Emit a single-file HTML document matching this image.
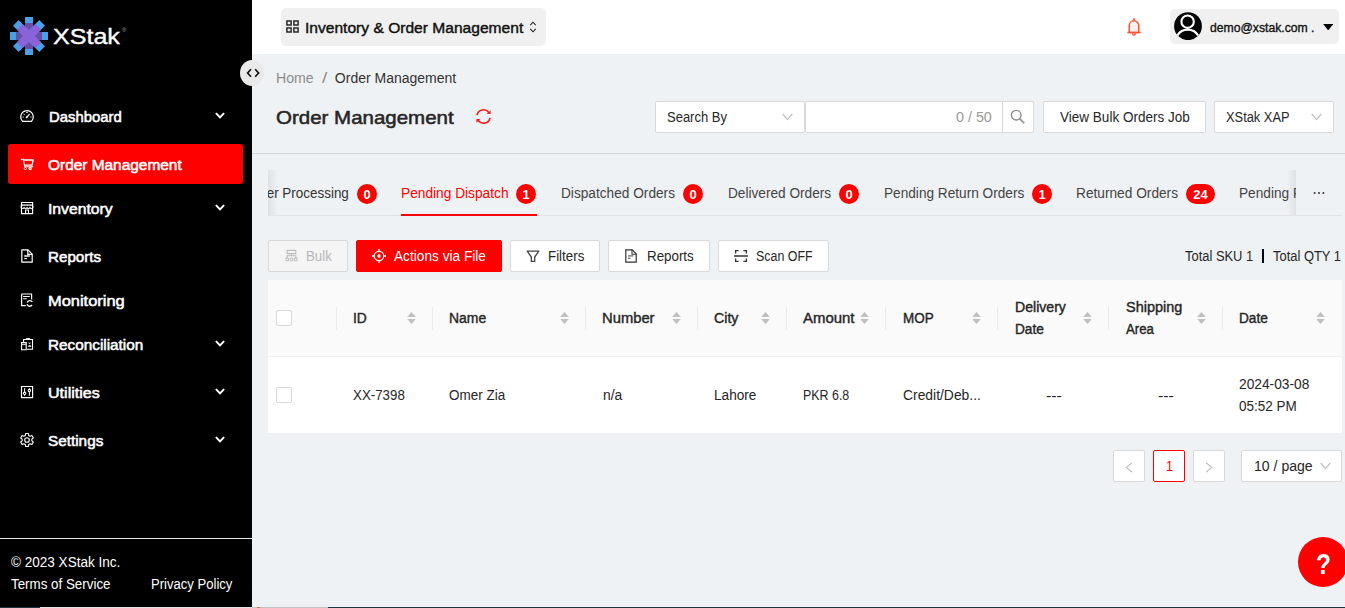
<!DOCTYPE html>
<html lang="en">
<head>
<meta charset="utf-8">
<title>Order Management - XStak</title>
<style>
*{box-sizing:border-box;margin:0;padding:0}
html,body{width:1345px;height:608px;overflow:hidden}
body{position:relative;background:#eff2f5;font-family:'Liberation Sans',sans-serif;font-size:14px;color:#262626}
.t{position:absolute;white-space:pre;transform-origin:0 50%;font-weight:400;font-style:normal}
h1.t{font-weight:400}
.abs,.box,.mi,.chev,.sort,.sep,.cb,.bdg,.ink,.more,.help,.active,.fl,.hr,.appsel,.usr,.clp,.thead,.tabline,.tabclip,.shl,.shr{position:absolute;display:block}
.sb{position:absolute;left:0;top:0;width:252px;height:608px;background:#000}
.logo{letter-spacing:0}
.mi{width:14px;height:14px;overflow:visible}
.chev{width:10px;height:8px}
.active{background:#ff0000;border-radius:3px}
.fl{left:0;top:538px;width:252px;height:1px;background:#e6e6e6}
.hd{position:absolute;left:252px;top:0;width:1093px;height:54px;background:#fff}
.hd>*{margin-left:-252px}
.appsel{left:281px;top:8px;width:265px;height:38px;background:#f0f0f0;border-radius:5px}
.usr{left:1170px;top:9px;width:169px;height:35px;background:#f0f0f0;border-radius:5px}
.clp{left:240px;top:60px;width:24px;height:26px;border-radius:50%;background:#e9e9e9}
.clp svg{width:24px;height:24px;display:block;margin-top:1px}
.box{background:#fff;border:1px solid #d9d9d9;border-radius:2px}
.box.dis{background:#f5f5f5}
.box.red{background:#ff0000;border-color:#ff0000}
.box.pact{border-color:#ff0000}
.hr{left:252px;top:153px;width:1093px;height:1px;background:#d4d7da}
.tabs{position:absolute;left:268px;top:170px;width:1074px;height:46px}
.tabline{left:0;top:45px;width:1074px;height:1px;background:#e1e3e5}
.tabclip{overflow:hidden}
.bdg{height:20px;border-radius:10px;background:#ff0000;color:#fff;font-size:13px;font-weight:700;line-height:21px;text-align:center;overflow:hidden}
.ink{height:2px;background:#ff0000}
.shl{left:0;top:0;width:10px;height:45px;background:linear-gradient(90deg,rgba(0,0,0,.065),rgba(0,0,0,0))}
.shr{left:1019px;top:0;width:9px;height:45px;background:linear-gradient(270deg,rgba(0,0,0,.07),rgba(0,0,0,0))}
.more{width:11px;height:3px}
.more i{display:block;float:left;width:2px;height:2px;background:#333;margin-right:2px;border-radius:1px}
.tbl{position:absolute;left:268px;top:280px;width:1074px;height:153px;background:#fff}
.thead{left:0;top:0;width:1074px;height:77px;background:#fafafa;border-bottom:1px solid #f0f0f0}
.sep{top:27px;width:1px;height:23px;background:#ececec}
.sort{width:9px;height:12px}
.cb{width:16px;height:16px;border:1px solid #d9d9d9;border-radius:2px;background:#fff}
.help{left:1298px;top:537px;width:50px;height:50px;border-radius:50%;background:#ff0000}
.strip{position:absolute;left:0;top:607px;width:1345px;height:1px}
.strip i{position:absolute;top:0;height:1px;display:block}

</style>
</head>
<body>
<aside class="sb">
<svg class="abs" style="left:10px;top:17px;width:38px;height:38px" viewBox="0 0 38 38">
<g transform="translate(19 19)">
<rect x="-4" y="-19" width="8" height="38" fill="#4a9fe6"/>
<rect x="-19" y="-4" width="38" height="8" fill="#4a9fe6"/>
<rect x="-4" y="-13" width="8" height="26" fill="#674ea7"/>
<rect x="-13" y="-4" width="26" height="8" fill="#674ea7"/>
<g transform="rotate(45)"><rect x="-4" y="-18.6" width="8" height="37.2" fill="#4a9fe6"/><rect x="-4" y="-13" width="8" height="26" fill="#8b62d9"/></g>
<g transform="rotate(-45)"><rect x="-4" y="-18.6" width="8" height="37.2" fill="#4a9fe6"/><rect x="-4" y="-13" width="8" height="26" fill="#8b62d9"/></g>
</g>
</svg>

<span class="t logo" style="left:52.83px;top:23px;font-size:21.5px;line-height:28px;color:#fff;-webkit-text-stroke:0.35px #fff;transform:scaleX(1.1664);">XStak</span>
<span class="t" style="left:121.86px;top:26px;font-size:6px;line-height:8px;color:#aaa;transform:scaleX(0.9574);">®</span>
<nav>
<svg class="mi" style="left:20px;top:109.0px" viewBox="0 0 14 14"><path d="M2.5 12.4 A6.3 6.4 0 1 1 11.5 12.4 Z" fill="none" stroke="#fff" stroke-width="1.25" stroke-linejoin="round"/><path d="M6.8 8.3 L9.6 4.9" stroke="#fff" stroke-width="1.2" fill="none"/><circle cx="6.7" cy="8.3" r="1" fill="#fff"/><path d="M2.6 8h1.2M10.4 8h1.2M6.2 3.6h1.6M3.6 5l1.2.9" stroke="#fff" stroke-width=".9" fill="none"/></svg>
<span class="t" style="left:48.66px;top:106px;font-size:15.5px;line-height:21px;color:#fff;-webkit-text-stroke:0.55px #fff;transform:scaleX(0.9604);">Dashboard</span>
<svg class="chev" style="left:215px;top:112.0px" viewBox="0 0 10 8"><path d="M0.9 1.1l4.1 4.3 4.1-4.3" fill="none" stroke="#fff" stroke-width="2"/></svg>
<div class="active" style="left:8px;top:144px;width:235px;height:40px"></div>
<svg class="mi" style="left:20px;top:157.0px" viewBox="0 0 14 14"><path d="M0.8 2.4h2.5l1.5 7.3h8.4" fill="none" stroke="#fff" stroke-width="1.1"/><path d="M3.6 3h9.5l-1 5.1H4.7" fill="none" stroke="#fff" stroke-width="1.3"/><circle cx="5.4" cy="11.5" r="1.1" fill="none" stroke="#fff" stroke-width="1"/><circle cx="10.2" cy="11.5" r="1.1" fill="none" stroke="#fff" stroke-width="1.2"/></svg>
<span class="t" style="left:48.35px;top:154px;font-size:15.5px;line-height:21px;color:#fff;-webkit-text-stroke:0.55px #fff;transform:scaleX(0.9948);">Order Management</span>
<svg class="mi" style="left:20px;top:201.0px" viewBox="0 0 14 14"><path d="M1.5 1.5h11.1v11.1H1.5z" fill="none" stroke="#fff" stroke-width="1.2" stroke-linejoin="round"/><path d="M1.5 4.1h11.1" fill="none" stroke="#fff" stroke-width="1.3"/><path d="M1.2 4.4v2.2q1.5 1.8 2.9 0 1.4 1.8 2.9 0 1.4 1.8 2.9 0 1.4 1.8 2.9 0V4.4" fill="none" stroke="#fff" stroke-width="1.1"/><path d="M5.6 12.6V9h2.9v3.6" fill="none" stroke="#fff" stroke-width="1.1"/></svg>
<span class="t" style="left:48.03px;top:198px;font-size:15.5px;line-height:21px;color:#fff;-webkit-text-stroke:0.55px #fff;transform:scaleX(1.0141);">Inventory</span>
<svg class="chev" style="left:215px;top:204.0px" viewBox="0 0 10 8"><path d="M0.9 1.1l4.1 4.3 4.1-4.3" fill="none" stroke="#fff" stroke-width="2"/></svg>
<svg class="mi" style="left:20px;top:249.0px" viewBox="0 0 14 14"><path d="M1.8 0.9h6.2l4.2 4.2v8.1H1.8z" fill="none" stroke="#fff" stroke-width="1.2" stroke-linejoin="round"/><path d="M7.8 0.9v4.4h4.4" fill="none" stroke="#fff" stroke-width="1.2"/><path d="M4.2 7h5.6" stroke="#fff" stroke-width="1.5"/><path d="M4.2 9.6h2.8" stroke="#fff" stroke-width="1.1"/></svg>
<span class="t" style="left:48.35px;top:246px;font-size:15.5px;line-height:21px;color:#fff;-webkit-text-stroke:0.55px #fff;transform:scaleX(0.9781);">Reports</span>
<svg class="mi" style="left:20px;top:293.0px" viewBox="0 0 14 14"><path d="M5.8 12.7H1.6V1h10v5.4" fill="none" stroke="#fff" stroke-width="1.2" stroke-linejoin="round"/><path d="M3.2 3.5h6.6M3.2 5.7h3.6" stroke="#fff" stroke-width="1.1"/><path d="M12.3 8.9A2.8 2.8 0 0 0 7.2 9.6M7 11.2a2.8 2.8 0 0 0 5.1.7" fill="none" stroke="#fff" stroke-width="1.3"/></svg>
<span class="t" style="left:48.34px;top:290px;font-size:15.5px;line-height:21px;color:#fff;-webkit-text-stroke:0.55px #fff;transform:scaleX(1.0600);">Monitoring</span>
<svg class="mi" style="left:20px;top:337.0px" viewBox="0 0 14 14"><path d="M3.6 5V2.5h8.9v9.7H7" fill="none" stroke="#fff" stroke-width="1.1"/><path d="M6.4 2.6V1.5h3.4v1.1" fill="#fff" stroke="#fff" stroke-width=".8" stroke-linejoin="round"/><path d="M1.6 5.5h4.6v7.2H1.6z" fill="none" stroke="#fff" stroke-width="1.1"/><path d="M1.6 7.3h4.6" stroke="#ccc" stroke-width="1.5"/><path d="M8.6 5.8l.9 1 .9-1M8.3 9.3q1.4-1.6 2.8 0z" fill="#fff" stroke="#fff" stroke-width=".8"/></svg>
<span class="t" style="left:48.35px;top:334px;font-size:15.5px;line-height:21px;color:#fff;-webkit-text-stroke:0.55px #fff;transform:scaleX(0.9876);">Reconciliation</span>
<svg class="chev" style="left:215px;top:340.0px" viewBox="0 0 10 8"><path d="M0.9 1.1l4.1 4.3 4.1-4.3" fill="none" stroke="#fff" stroke-width="2"/></svg>
<svg class="mi" style="left:20px;top:385.0px" viewBox="0 0 14 14"><path d="M1.5 1.5h11.1v11.1H1.5z" fill="none" stroke="#fff" stroke-width="1.2" stroke-linejoin="round"/><path d="M4.6 3.2v7.6M9.4 3.2v7.6" stroke="#fff" stroke-width="1"/><circle cx="4.6" cy="8.3" r="1.2" fill="#000" stroke="#fff" stroke-width="1.1"/><circle cx="9.4" cy="5.6" r="1.2" fill="#000" stroke="#fff" stroke-width="1.1"/></svg>
<span class="t" style="left:48.34px;top:382px;font-size:15.5px;line-height:21px;color:#fff;-webkit-text-stroke:0.55px #fff;transform:scaleX(1.0362);">Utilities</span>
<svg class="chev" style="left:215px;top:388.0px" viewBox="0 0 10 8"><path d="M0.9 1.1l4.1 4.3 4.1-4.3" fill="none" stroke="#fff" stroke-width="2"/></svg>
<svg class="mi" style="left:20px;top:433.0px" viewBox="0 0 14 14"><path d="M8.68 2.40 L8.37 0.54 L5.63 0.54 L5.32 2.40 L3.85 3.25 L2.10 2.58 L0.72 4.96 L2.17 6.15 L2.17 7.85 L0.72 9.04 L2.10 11.42 L3.85 10.75 L5.32 11.60 L5.63 13.46 L8.37 13.46 L8.68 11.60 L10.15 10.75 L11.90 11.42 L13.28 9.04 L11.83 7.85 L11.83 6.15 L13.28 4.96 L11.90 2.58 L10.15 3.25Z" fill="none" stroke="#fff" stroke-width="1.15" stroke-linejoin="round"/><circle cx="7" cy="7" r="2.3" fill="none" stroke="#fff" stroke-width="1.1"/></svg>
<span class="t" style="left:48.35px;top:430px;font-size:15.5px;line-height:21px;color:#fff;-webkit-text-stroke:0.55px #fff;transform:scaleX(0.9874);">Settings</span>
<svg class="chev" style="left:215px;top:436.0px" viewBox="0 0 10 8"><path d="M0.9 1.1l4.1 4.3 4.1-4.3" fill="none" stroke="#fff" stroke-width="2"/></svg>
</nav>
<div class="fl"></div>
<span class="t" style="left:11.35px;top:553px;font-size:14px;line-height:19px;color:#fff;transform:scaleX(0.9672);">© 2023 XStak Inc.</span>
<span class="t" style="left:11.36px;top:575px;font-size:14px;line-height:19px;color:#fff;transform:scaleX(0.9547);">Terms of Service</span>
<span class="t" style="left:150.93px;top:575px;font-size:14px;line-height:19px;color:#fff;transform:scaleX(0.9343);">Privacy Policy</span>
</aside>
<header class="hd">
<div class="appsel"></div>
<svg class="abs" style="left:286px;top:20px;width:13px;height:13px" viewBox="0 0 13 13"><path d="M.9.9h4.2v4.2H.9zM7.9.9h4.2v4.2H7.9zM.9 7.9h4.2v4.2H.9zM7.9 7.9h4.2v4.2H7.9z" fill="none" stroke="#2a2a2a" stroke-width="1.5"/></svg>
<svg class="abs" style="left:529px;top:20.6px;width:8px;height:12px" viewBox="0 0 8 12"><path d="M1.3 4.2L4 1.2 6.7 4.2M1.3 7.8L4 10.8 6.7 7.8" fill="none" stroke="#222" stroke-width="1.1"/></svg>
<svg class="abs" style="left:1126px;top:17px;width:16px;height:20px" viewBox="0 0 16 20"><path d="M8 1.8v1.6" fill="none" stroke="#ff5136" stroke-width="1.6" stroke-linecap="round"/><path d="M3.2 15.4V8.6a4.8 4.8 0 0 1 9.6 0v6.8z" fill="#fff1ee" stroke="#ff5136" stroke-width="1.5"/><path d="M2 15.4h12" fill="none" stroke="#ff5136" stroke-width="1.5" stroke-linecap="round"/><circle cx="8" cy="16.9" r="1.3" fill="#fff1ee" stroke="#ff5136" stroke-width="1.2"/></svg>
<div class="usr"></div>
<svg class="abs" style="left:1174px;top:12px;width:28px;height:28px" viewBox="0 0 28 28"><circle cx="14" cy="14.2" r="13.9" fill="#000"/><circle cx="13.6" cy="9.7" r="6.2" fill="none" stroke="#fff" stroke-width="2.1"/><path d="M3.4 23.4c2.4-3.9 5.9-5.7 10.3-5.7s7.9 1.8 10.3 5.7" fill="none" stroke="#fff" stroke-width="2.2"/></svg>
<svg class="abs" style="left:1323px;top:24px;width:10.4px;height:6.4px" viewBox="0 0 11 7"><path d="M0 0h11L5.5 7z" fill="#000"/></svg>
<span class="t" style="left:305.34px;top:17px;font-size:15.5px;line-height:21px;color:#111;-webkit-text-stroke:0.43px #111;transform:scaleX(1.0051);">Inventory &amp; Order Management</span>
<span class="t" style="left:1210.35px;top:20px;font-size:12.5px;line-height:17px;color:#111;-webkit-text-stroke:0.35px #111;transform:scaleX(0.9747);">demo@xstak.com .</span>
</header>
<div class="clp"><svg viewBox="0 0 24 24"><path d="M11 8.2L7.6 12l3.4 3.8M15.2 8.2L18.6 12l-3.4 3.8" fill="none" stroke="#111" stroke-width="1.7"/></svg></div>
<main>
<span class="t" style="left:276.34px;top:69px;font-size:14px;line-height:19px;color:#8c8c8c;transform:scaleX(1.0084);">Home</span>
<span class="t" style="left:321.80px;top:69px;font-size:14px;line-height:19px;color:#8c8c8c;transform:scaleX(1.3514);">/</span>
<span class="t" style="left:334.85px;top:69px;font-size:14px;line-height:19px;color:#333;">Order Management</span>
<h1 class="t" style="left:276.14px;top:105px;font-size:19px;line-height:25px;color:#262626;-webkit-text-stroke:0.53px #262626;transform:scaleX(1.0785);">Order Management</h1>
<svg class="abs" style="left:474.5px;top:108.3px;width:17px;height:17px" viewBox="0 0 17 17"><path d="M2 7.2A6.6 6.6 0 0 1 13.8 4.4M15 9.8A6.6 6.6 0 0 1 3.2 12.6" fill="none" stroke="#ff1717" stroke-width="1.6"/><path d="M15.6 2.2v3.9h-3.9zM1.4 14.8v-3.9h3.9z" fill="#ff1717"/></svg>
<div class="box" style="left:655px;top:101px;width:150px;height:32px"></div>
<svg class="abs" style="left:782px;top:112.5px;width:11px;height:8px" viewBox="0 0 11 8"><path d="M.7 1l4.8 5.6L10.3 1" fill="none" stroke="#bfbfbf" stroke-width="1.2"/></svg>
<div class="box" style="left:805px;top:101px;width:198px;height:32px;border-radius:2px 0 0 2px"></div>
<div class="box" style="left:1002px;top:101px;width:32px;height:32px;border-radius:0 2px 2px 0"></div>
<svg class="abs" style="left:1010px;top:109.3px;width:15px;height:15px" viewBox="0 0 15 15"><circle cx="6.2" cy="6.2" r="4.8" fill="none" stroke="#8c8c8c" stroke-width="1.4"/><path d="M9.6 9.6l4.7 4.7" stroke="#8c8c8c" stroke-width="1.6"/></svg>
<div class="box" style="left:1043px;top:101px;width:163px;height:32px"></div>
<div class="box" style="left:1214px;top:101px;width:120px;height:32px"></div>
<svg class="abs" style="left:1311px;top:112.5px;width:11px;height:8px" viewBox="0 0 11 8"><path d="M.7 1l4.8 5.6L10.3 1" fill="none" stroke="#bfbfbf" stroke-width="1.2"/></svg>
<span class="t" style="left:667.36px;top:108px;font-size:14px;line-height:19px;color:#262626;transform:scaleX(0.9274);">Search By</span>
<span class="t" style="left:955.85px;top:108px;font-size:14px;line-height:19px;color:#999;transform:scaleX(1.0231);">0 / 50</span>
<span class="t" style="left:1060.16px;top:108px;font-size:14px;line-height:19px;color:#262626;transform:scaleX(0.9663);">View Bulk Orders Job</span>
<span class="t" style="left:1225.86px;top:108px;font-size:14px;line-height:19px;color:#262626;transform:scaleX(0.9170);">XStak XAP</span>
<div class="hr"></div>
<div class="tabs">
<div class="tabline"></div>
<div class="tabclip" style="left:0;top:0;width:1028px;height:45px">
<span class="t" style="left:-25.93px;top:14px;font-size:14px;line-height:19px;color:#333;transform:scaleX(0.9601);">Under Processing</span>
<span class="t" style="left:970.88px;top:14px;font-size:14px;line-height:19px;color:#444;transform:scaleX(0.9759);">Pending </span><span class="t" style="left:1025.21px;top:14px;font-size:14px;line-height:19px;color:#444;transform:scaleX(0.9500);">Refund</span>
</div>
<span class="t" style="left:132.87px;top:14px;font-size:14px;line-height:19px;color:#ff0000;transform:scaleX(0.9798);">Pending Dispatch</span>
<span class="t" style="left:292.88px;top:14px;font-size:14px;line-height:19px;color:#444;transform:scaleX(0.9767);">Dispatched Orders</span>
<span class="t" style="left:459.88px;top:14px;font-size:14px;line-height:19px;color:#444;transform:scaleX(0.9742);">Delivered Orders</span>
<span class="t" style="left:615.88px;top:14px;font-size:14px;line-height:19px;color:#444;transform:scaleX(0.9741);">Pending Return Orders</span>
<span class="t" style="left:808.37px;top:14px;font-size:14px;line-height:19px;color:#444;transform:scaleX(0.9786);">Returned Orders</span>
<span class="bdg" style="left:89px;top:14px;width:20px">0</span>
<span class="bdg" style="left:248px;top:14px;width:20px">1</span>
<span class="bdg" style="left:415px;top:14px;width:20px">0</span>
<span class="bdg" style="left:571px;top:14px;width:20px">0</span>
<span class="bdg" style="left:764px;top:14px;width:20px">1</span>
<span class="bdg" style="left:918px;top:14px;width:29px">24</span>
<div class="ink" style="left:133px;top:43.5px;width:136px"></div>
<div class="shl"></div><div class="shr"></div>
<svg class="abs" style="left:1045px;top:21px;width:12px;height:4px" viewBox="0 0 12 4"><circle cx="1.6" cy="2" r="1" fill="#333"/><circle cx="6" cy="2" r="1" fill="#333"/><circle cx="10.4" cy="2" r="1" fill="#333"/></svg>
</div>
<div class="box dis" style="left:268px;top:240px;width:80px;height:32px"></div>
<div class="box red" style="left:356px;top:240px;width:146px;height:32px"></div>
<div class="box" style="left:510px;top:240px;width:90px;height:32px"></div>
<div class="box" style="left:608px;top:240px;width:102px;height:32px"></div>
<div class="box" style="left:718px;top:240px;width:111px;height:32px"></div>
<svg class="abs" style="left:284.5px;top:249px;width:13px;height:13px" viewBox="0 0 13 13"><path d="M2.2 1.4h8.6v3.2H2.2zM6.5 4.6v2.2M2.2 9V6.8h8.6V9" fill="none" stroke="#bcbcbc" stroke-width="1.1"/><path d="M.9 9.2h2.6v2.6H.9zM5.2 9.2h2.6v2.6H5.2zM9.5 9.2h2.6v2.6H9.5z" fill="none" stroke="#bcbcbc" stroke-width="1"/></svg>
<svg class="abs" style="left:372px;top:249px;width:14px;height:14px" viewBox="0 0 14 14"><circle cx="7" cy="7" r="4.7" fill="none" stroke="#fff" stroke-width="1.3"/><circle cx="7" cy="7" r="1.7" fill="#fff"/><path d="M7 0v2.4M7 11.6V14M0 7h2.4M11.6 7H14" stroke="#fff" stroke-width="1.3"/></svg>
<svg class="abs" style="left:526px;top:249.5px;width:14px;height:13px" viewBox="0 0 14 13"><path d="M1.2 1.2h11.6L8.7 7v4.4H5.3V7z" fill="none" stroke="#444" stroke-width="1.3" stroke-linejoin="round"/></svg>
<svg class="abs" style="left:625px;top:249px;width:12px;height:14px" viewBox="0 0 12 14"><path d="M.8.8h6.4l4 4v8.4H.8z" fill="none" stroke="#333" stroke-width="1.2"/><path d="M7 .8v4.4h4.2" fill="none" stroke="#333" stroke-width="1.1"/><path d="M3 6.9h5.4" stroke="#777" stroke-width="1.4"/><path d="M3 9.3h2.6" stroke="#555" stroke-width="1"/></svg>
<svg class="abs" style="left:734px;top:249px;width:14px;height:14px" viewBox="0 0 14 14"><path d="M1.6 4.6V1.6h3M9.4 1.6h3v3M12.4 9.4v3h-3M4.6 12.4h-3v-3M0 7h14" fill="none" stroke="#333" stroke-width="1.3"/></svg>
<div class="abs" style="left:1261.5px;top:249px;width:2.5px;height:13.5px;background:#000"></div>
<span class="t" style="left:306.41px;top:247px;font-size:14px;line-height:19px;color:#b8b8b8;transform:scaleX(0.9476);">Bulk</span>
<span class="t" style="left:394.35px;top:247px;font-size:14px;line-height:19px;color:#fff;transform:scaleX(0.9765);">Actions via File</span>
<span class="t" style="left:548.40px;top:247px;font-size:14px;line-height:19px;color:#262626;transform:scaleX(0.9537);">Filters</span>
<span class="t" style="left:646.90px;top:247px;font-size:14px;line-height:19px;color:#262626;transform:scaleX(0.9539);">Reports</span>
<span class="t" style="left:755.87px;top:247px;font-size:14px;line-height:19px;color:#262626;transform:scaleX(0.8870);">Scan OFF</span>
<span class="t" style="left:1184.86px;top:247px;font-size:14px;line-height:19px;color:#262626;transform:scaleX(0.9227);">Total SKU 1</span>
<span class="t" style="left:1272.86px;top:247px;font-size:14px;line-height:19px;color:#262626;transform:scaleX(0.9227);">Total QTY 1</span>
<div class="tbl">
<div class="thead"></div>
<i class="sep" style="left:68.0px"></i>
<i class="sep" style="left:164.0px"></i>
<i class="sep" style="left:317.0px"></i>
<i class="sep" style="left:429.0px"></i>
<i class="sep" style="left:518.0px"></i>
<i class="sep" style="left:617.0px"></i>
<i class="sep" style="left:729.0px"></i>
<i class="sep" style="left:840.0px"></i>
<i class="sep" style="left:954.0px"></i>
<svg class="sort" style="left:139px;top:32px" viewBox="0 0 9 12"><path d="M4.5 0L8.8 4.9H.2z M4.5 12L.2 7.1h8.6z" fill="#bfbfbf"/></svg>
<svg class="sort" style="left:292px;top:32px" viewBox="0 0 9 12"><path d="M4.5 0L8.8 4.9H.2z M4.5 12L.2 7.1h8.6z" fill="#bfbfbf"/></svg>
<svg class="sort" style="left:404px;top:32px" viewBox="0 0 9 12"><path d="M4.5 0L8.8 4.9H.2z M4.5 12L.2 7.1h8.6z" fill="#bfbfbf"/></svg>
<svg class="sort" style="left:493px;top:32px" viewBox="0 0 9 12"><path d="M4.5 0L8.8 4.9H.2z M4.5 12L.2 7.1h8.6z" fill="#bfbfbf"/></svg>
<svg class="sort" style="left:592px;top:32px" viewBox="0 0 9 12"><path d="M4.5 0L8.8 4.9H.2z M4.5 12L.2 7.1h8.6z" fill="#bfbfbf"/></svg>
<svg class="sort" style="left:704px;top:32px" viewBox="0 0 9 12"><path d="M4.5 0L8.8 4.9H.2z M4.5 12L.2 7.1h8.6z" fill="#bfbfbf"/></svg>
<svg class="sort" style="left:815px;top:32px" viewBox="0 0 9 12"><path d="M4.5 0L8.8 4.9H.2z M4.5 12L.2 7.1h8.6z" fill="#bfbfbf"/></svg>
<svg class="sort" style="left:929px;top:32px" viewBox="0 0 9 12"><path d="M4.5 0L8.8 4.9H.2z M4.5 12L.2 7.1h8.6z" fill="#bfbfbf"/></svg>
<svg class="sort" style="left:1048px;top:32px" viewBox="0 0 9 12"><path d="M4.5 0L8.8 4.9H.2z M4.5 12L.2 7.1h8.6z" fill="#bfbfbf"/></svg>
<i class="cb" style="left:8px;top:30px"></i><i class="cb" style="left:8px;top:107px"></i>
<span class="t" style="left:84.85px;top:29px;font-size:14px;line-height:19px;color:#262626;-webkit-text-stroke:0.39px #262626;transform:scaleX(0.9854);">ID</span>
<span class="t" style="left:180.85px;top:29px;font-size:14px;line-height:19px;color:#262626;-webkit-text-stroke:0.39px #262626;transform:scaleX(0.9947);">Name</span>
<span class="t" style="left:334.34px;top:29px;font-size:14px;line-height:19px;color:#262626;-webkit-text-stroke:0.39px #262626;transform:scaleX(1.0552);">Number</span>
<span class="t" style="left:445.85px;top:29px;font-size:14px;line-height:19px;color:#262626;-webkit-text-stroke:0.39px #262626;transform:scaleX(1.0121);">City</span>
<span class="t" style="left:534.91px;top:29px;font-size:14px;line-height:19px;color:#262626;-webkit-text-stroke:0.39px #262626;transform:scaleX(1.0664);">Amount</span>
<span class="t" style="left:634.86px;top:29px;font-size:14px;line-height:19px;color:#262626;-webkit-text-stroke:0.39px #262626;transform:scaleX(0.9621);">MOP</span>
<span class="t" style="left:746.85px;top:18px;font-size:14px;line-height:19px;color:#262626;-webkit-text-stroke:0.39px #262626;transform:scaleX(1.0059);">Delivery</span>
<span class="t" style="left:746.85px;top:40px;font-size:14px;line-height:19px;color:#262626;-webkit-text-stroke:0.39px #262626;transform:scaleX(0.9764);">Date</span>
<span class="t" style="left:857.85px;top:18px;font-size:14px;line-height:19px;color:#262626;-webkit-text-stroke:0.39px #262626;transform:scaleX(1.0329);">Shipping</span>
<span class="t" style="left:858.30px;top:40px;font-size:14px;line-height:19px;color:#262626;-webkit-text-stroke:0.39px #262626;transform:scaleX(0.9446);">Area</span>
<span class="t" style="left:970.85px;top:29px;font-size:14px;line-height:19px;color:#262626;-webkit-text-stroke:0.39px #262626;transform:scaleX(0.9764);">Date</span>
<span class="t" style="left:84.86px;top:106px;font-size:14px;line-height:19px;color:#262626;transform:scaleX(0.9506);">XX-7398</span>
<span class="t" style="left:180.86px;top:106px;font-size:14px;line-height:19px;color:#262626;transform:scaleX(0.9625);">Omer Zia</span>
<span class="t" style="left:334.85px;top:106px;font-size:14px;line-height:19px;color:#262626;transform:scaleX(0.9898);">n/a</span>
<span class="t" style="left:445.88px;top:106px;font-size:14px;line-height:19px;color:#262626;transform:scaleX(0.9719);">Lahore</span>
<span class="t" style="left:534.98px;top:106px;font-size:14px;line-height:19px;color:#262626;transform:scaleX(0.8876);">PKR 6.8</span>
<span class="t" style="left:634.85px;top:106px;font-size:14px;line-height:19px;color:#262626;transform:scaleX(0.9910);">Credit/Deb...</span>
<span class="t" style="left:778.33px;top:107px;font-size:14px;line-height:19px;color:#262626;transform:scaleX(1.1314);">---</span>
<span class="t" style="left:890.33px;top:107px;font-size:14px;line-height:19px;color:#262626;transform:scaleX(1.1314);">---</span>
<span class="t" style="left:970.85px;top:95px;font-size:14px;line-height:19px;color:#262626;transform:scaleX(0.9833);">2024-03-08</span>
<span class="t" style="left:970.86px;top:117px;font-size:14px;line-height:19px;color:#262626;transform:scaleX(0.9625);">05:52 PM</span>
</div>
<div class="box" style="left:1113px;top:450px;width:32px;height:32px"></div>
<div class="box pact" style="left:1153px;top:450px;width:32px;height:32px"></div>
<div class="box" style="left:1193px;top:450px;width:32px;height:32px"></div>
<div class="box" style="left:1241px;top:450px;width:101px;height:32px"></div>
<svg class="abs" style="left:1125px;top:461.6px;width:8px;height:11px" viewBox="0 0 8 11"><path d="M7 .8L1.2 5.5 7 10.2" fill="none" stroke="#bfbfbf" stroke-width="1.1"/></svg>
<svg class="abs" style="left:1205px;top:461.6px;width:8px;height:11px" viewBox="0 0 8 11"><path d="M1 .8l5.8 4.7L1 10.2" fill="none" stroke="#bfbfbf" stroke-width="1.1"/></svg>
<svg class="abs" style="left:1319.5px;top:462px;width:11px;height:8px" viewBox="0 0 11 8"><path d="M.7 1l4.8 5.6L10.3 1" fill="none" stroke="#bfbfbf" stroke-width="1.2"/></svg>
<span class="t" style="left:1165.97px;top:457px;font-size:14px;line-height:19px;color:#ff0000;transform:scaleX(0.8955);">1</span>
<span class="t" style="left:1253.84px;top:457px;font-size:14px;line-height:19px;color:#262626;transform:scaleX(1.0053);">10 / page</span>
<div class="help"></div>
<span class="t" style="left:1315.85px;top:544px;font-size:29.5px;line-height:39px;color:#fff;font-weight:700;transform:scaleX(0.8280);">?</span>
</main>
<div class="strip"><i style="left:0;width:40px;background:#1d3640"></i><i style="left:40px;width:212px;background:#e2e2e2"></i><i style="left:252px;width:76px;background:#c2c2c2"></i><i style="left:257px;width:3px;background:#c9764f"></i><i style="left:328px;width:1017px;background:#1d3640"></i></div>
</body>
</html>
